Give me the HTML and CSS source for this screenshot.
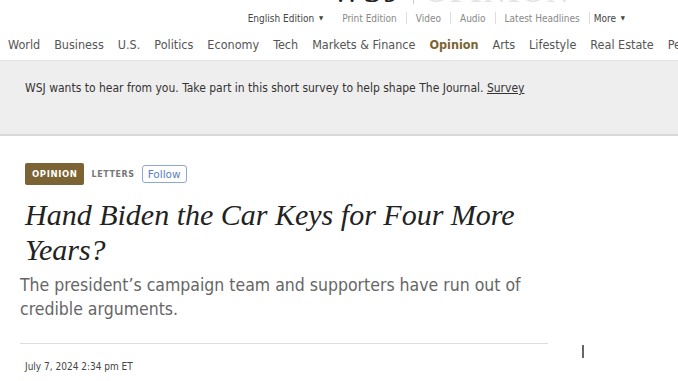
FILE: index.html
```html
<!DOCTYPE html>
<html lang="en">
<head>
  <meta charset="UTF-8" />
  <title>Hand Biden the Car Keys for Four More Years? - WSJ</title>
  <link rel="stylesheet" href="styles.css">
</head>
<body>
  <header class="masthead">
    <div class="logo">
      <span class="logo-wsj">WSJ</span>
      <span class="logo-sep"></span>
      <span class="logo-section">OPINION</span>
    </div>

    <div class="utility">
      <span class="edition">English Edition <span class="caret">▼</span></span>
      <a href="#">Print Edition</a>
      <span class="pipe"></span>
      <a href="#">Video</a>
      <span class="pipe"></span>
      <a href="#">Audio</a>
      <span class="pipe"></span>
      <a href="#">Latest Headlines</a>
      <span class="pipe"></span>
      <a href="#" class="more">More <span class="caret">▼</span></a>
    </div>

    <nav class="sections">
      <a href="#">World</a>
      <a href="#">Business</a>
      <a href="#">U.S.</a>
      <a href="#">Politics</a>
      <a href="#">Economy</a>
      <a href="#">Tech</a>
      <a href="#">Markets &amp; Finance</a>
      <a href="#" class="active">Opinion</a>
      <a href="#">Arts</a>
      <a href="#">Lifestyle</a>
      <a href="#">Real Estate</a>
      <a href="#">Personal Finance</a>
    </nav>
  </header>

  <div class="survey">
    WSJ wants to hear from you. Take part in this short survey to help shape The Journal. <a href="#">Survey</a>
  </div>

  <main class="article">
    <div class="article-main">
      <div class="flags">
        <span class="badge">OPINION</span>
        <span class="column">LETTERS</span>
        <button class="follow">Follow</button>
      </div>

      <h1>Hand Biden the Car Keys for Four More Years?</h1>
      <h2>The president’s campaign team and supporters have run out of credible arguments.</h2>

      <div class="byline">
        <time>July 7, 2024 2:34 pm ET</time>
      </div>
    </div>

    <div class="article-side">
      <span class="cursor"></span>
    </div>
  </main>
</body>
</html>
```

FILE: styles.css
```css
body {
  margin: 0;
  font-family: "DejaVu Sans Condensed", "Liberation Sans", sans-serif;
  color: #222;
  background: #fff;
  overflow: hidden;
}

a {
  color: inherit;
  text-decoration: none;
}

/* masthead */
.masthead {
  display: flow-root;
  height: 60px;
  overflow: hidden;
}

.logo {
  display: flex;
  align-items: center;
  gap: 11px;
  height: 24px;
  margin-top: -20px;
  padding-left: 331px;
  font-family: "Liberation Serif", serif;
  font-size: 30px;
  font-weight: bold;
  line-height: 24px;
}

.logo-wsj {
  color: #222;
  letter-spacing: 3px;
}

.logo-sep {
  width: 1px;
  height: 24px;
  background: #ccc;
}

.logo-section {
  color: #e4e4e4;
  letter-spacing: 2px;
}

.utility {
  display: flex;
  align-items: center;
  justify-content: flex-end;
  gap: 9px;
  height: 16px;
  margin-top: 6px;
  padding-right: 53px;
  font-size: 10px;
  color: #888;
}

.utility .edition {
  color: #444;
  margin-right: 10px;
}

.utility .more {
  color: #444;
  margin-left: -5px;
}

.caret {
  font-size: 6px;
  vertical-align: 2px;
  margin-left: 2px;
}

.pipe {
  width: 1px;
  height: 12px;
  background: #ddd;
}

.sections {
  display: flex;
  gap: 14px;
  padding: 11px 0 0 8px;
  font-size: 12.5px;
  color: #555;
  white-space: nowrap;
}

.sections .active {
  color: #7b6333;
  font-weight: bold;
}

/* survey banner */
.survey {
  height: 76px;
  box-sizing: border-box;
  padding: 20px 25px 0;
  background: #eee;
  border-top: 1px solid #e2e2e2;
  border-bottom: 2px solid #d9d9d9;
  font-size: 12px;
  color: #333;
}

.survey a {
  text-decoration: underline;
}

/* article */
.article {
  display: flex;
}

.article-main {
  width: 528px;
  padding: 27px 0 0 20px;
}

.flags {
  display: flex;
  align-items: center;
  gap: 7px;
  padding-left: 5px;
}

.badge {
  display: inline-block;
  padding: 6px 7px;
  background: #7b6333;
  color: #fff;
  font-family: "DejaVu Sans", sans-serif;
  font-size: 8.5px;
  font-weight: bold;
  letter-spacing: 0.6px;
  border-radius: 2px;
}

.column {
  font-family: "DejaVu Sans", sans-serif;
  font-size: 8px;
  font-weight: bold;
  letter-spacing: 0.6px;
  color: #777;
}

.follow {
  padding: 2px 5px;
  background: #fff;
  border: 1px solid #8ea8d4;
  border-radius: 3px;
  color: #5b7fbf;
  font-family: "DejaVu Sans", sans-serif;
  font-size: 10.5px;
}

h1 {
  margin: 12px 0 0 5px;
  font-family: "Liberation Serif", serif;
  font-style: italic;
  font-weight: normal;
  font-size: 30px;
  line-height: 35px;
  color: #222;
}

h2 {
  margin: 6px 0 0;
  font-weight: normal;
  font-size: 17.5px;
  line-height: 24px;
  color: #666;
}

.byline {
  margin-top: 22px;
  padding: 17px 0 0 5px;
  border-top: 1px solid #ddd;
  font-size: 10px;
  color: #444;
}

.article-side {
  flex: 1;
  padding: 209px 0 0 34px;
}

.cursor {
  display: block;
  width: 2px;
  height: 13px;
  background: #666;
}
```
